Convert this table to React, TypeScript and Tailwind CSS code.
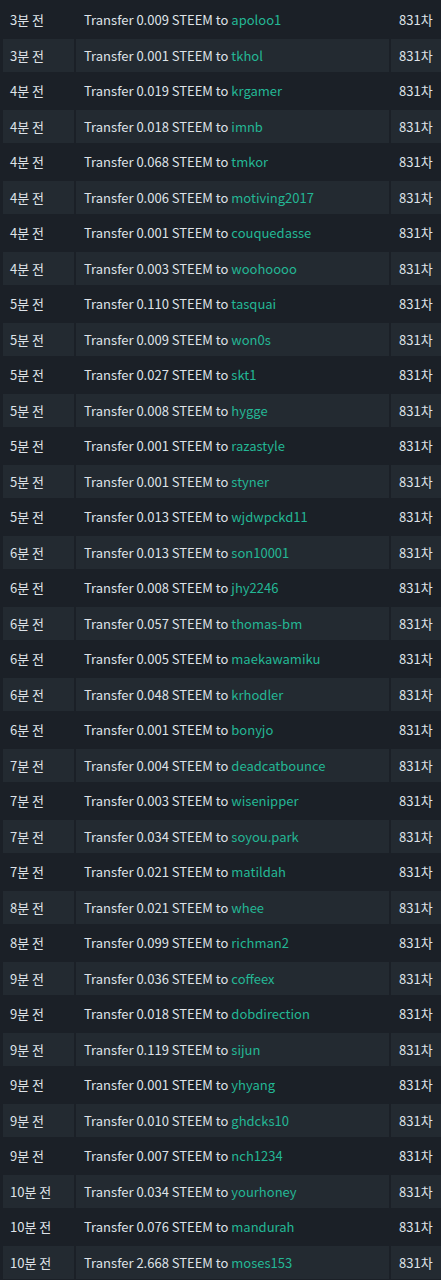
const rows: [string, string, string][] = [
  ["3분 전", "0.009", "apoloo1"],
  ["3분 전", "0.001", "tkhol"],
  ["4분 전", "0.019", "krgamer"],
  ["4분 전", "0.018", "imnb"],
  ["4분 전", "0.068", "tmkor"],
  ["4분 전", "0.006", "motiving2017"],
  ["4분 전", "0.001", "couquedasse"],
  ["4분 전", "0.003", "woohoooo"],
  ["5분 전", "0.110", "tasquai"],
  ["5분 전", "0.009", "won0s"],
  ["5분 전", "0.027", "skt1"],
  ["5분 전", "0.008", "hygge"],
  ["5분 전", "0.001", "razastyle"],
  ["5분 전", "0.001", "styner"],
  ["5분 전", "0.013", "wjdwpckd11"],
  ["6분 전", "0.013", "son10001"],
  ["6분 전", "0.008", "jhy2246"],
  ["6분 전", "0.057", "thomas-bm"],
  ["6분 전", "0.005", "maekawamiku"],
  ["6분 전", "0.048", "krhodler"],
  ["6분 전", "0.001", "bonyjo"],
  ["7분 전", "0.004", "deadcatbounce"],
  ["7분 전", "0.003", "wisenipper"],
  ["7분 전", "0.034", "soyou.park"],
  ["7분 전", "0.021", "matildah"],
  ["8분 전", "0.021", "whee"],
  ["8분 전", "0.099", "richman2"],
  ["9분 전", "0.036", "coffeex"],
  ["9분 전", "0.018", "dobdirection"],
  ["9분 전", "0.119", "sijun"],
  ["9분 전", "0.001", "yhyang"],
  ["9분 전", "0.010", "ghdcks10"],
  ["9분 전", "0.007", "nch1234"],
  ["10분 전", "0.034", "yourhoney"],
  ["10분 전", "0.076", "mandurah"],
  ["10분 전", "2.668", "moses153"],
];

export default function App() {
  return (
    <div
      className="min-h-[1280px] bg-[#1b2027] pl-[3px] pt-[3px] text-[13px] text-[#dfe3e8] overflow-hidden"
      style={{ fontFamily: '"Noto Sans CJK KR", "Noto Sans", sans-serif' }}
    >
      <div className="flex flex-col gap-[2px]">
        {rows.map(([ago, amount, to], i) => {
          // striped: every second row gets the lighter cells
          const cell = i % 2 === 1 ? "bg-[#232a31]" : "bg-[#1b2027]";
          return (
            <div key={i} className="grid grid-cols-[71px_313px_1fr] gap-[2px] h-[33.5px]">
              <div className={`${cell} flex items-center pl-[7px]`}>{ago}</div>
              <div className={`${cell} flex items-center pl-[8px] whitespace-nowrap`}>
                Transfer {amount} STEEM to&nbsp;
                <span className="text-[#23b795]">{to}</span>
              </div>
              <div className={`${cell} flex items-center pl-[8px]`}>831차</div>
            </div>
          );
        })}
      </div>
    </div>
  );
}
